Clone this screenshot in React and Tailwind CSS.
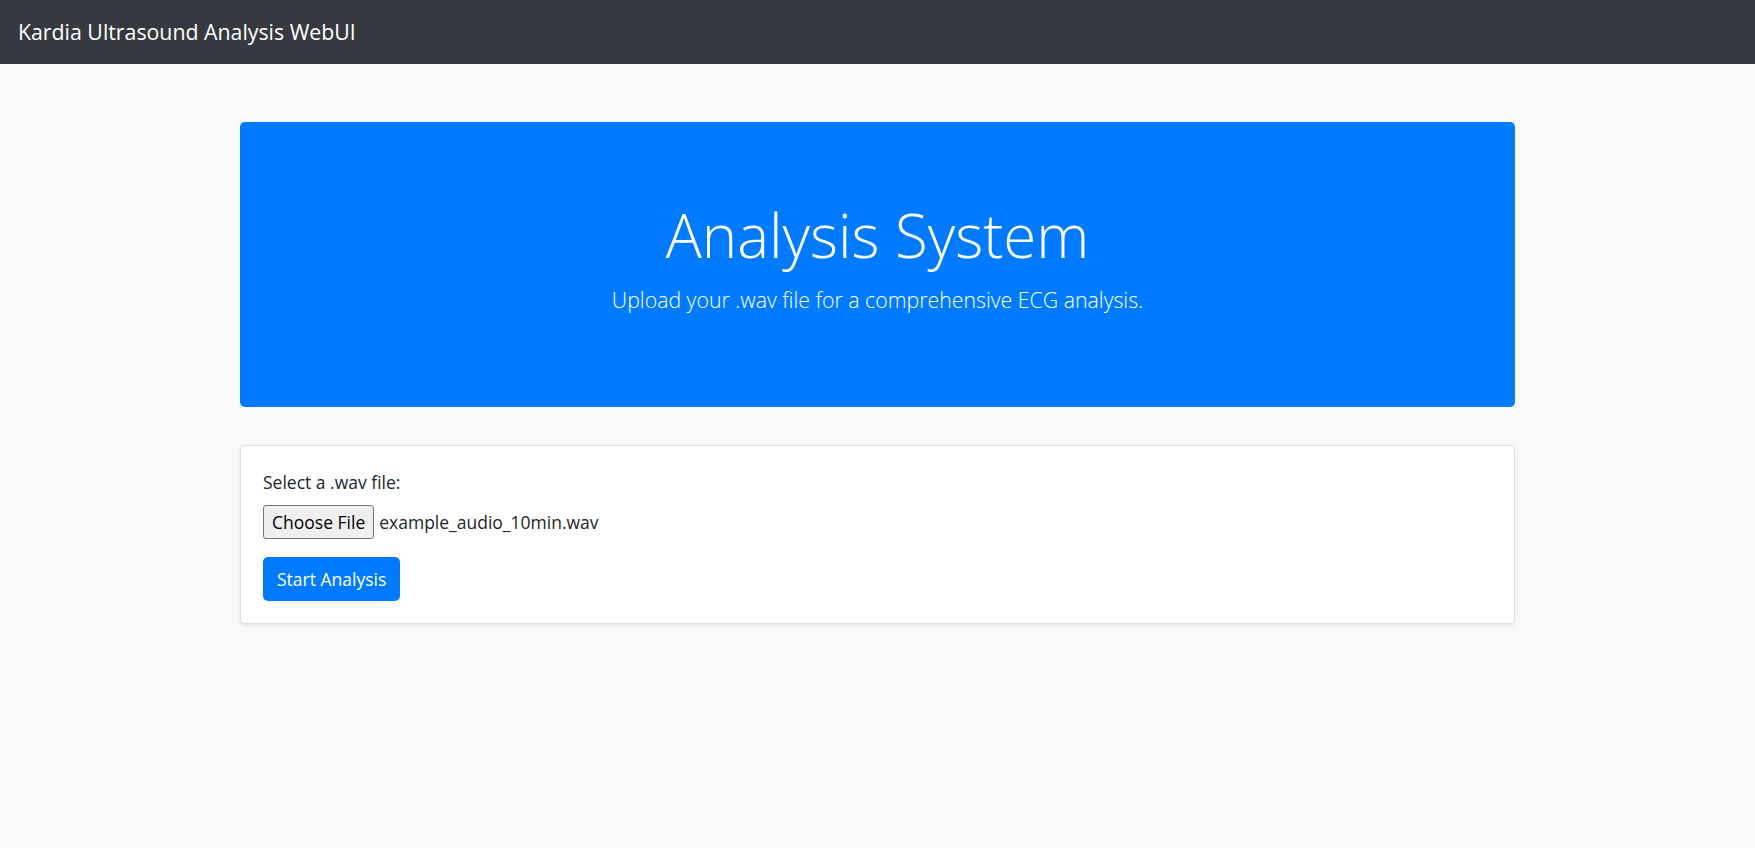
const font = { fontFamily: '"Open Sans", "Noto Sans", sans-serif' };

function Navbar() {
  return (
    <nav className="h-[64px] bg-[#343a40] flex items-center px-[18px]">
      <span className="text-white text-[21.3px] leading-none">Kardia Ultrasound Analysis WebUI</span>
    </nav>
  );
}

function Hero() {
  return (
    <div className="h-[285px] bg-[#007bff] rounded-[5px] text-white text-center pt-[76px]">
      <h1 className="text-[60px] font-light leading-[75px] mb-[10px]">Analysis System</h1>
      <p className="text-[21.3px] font-light leading-[34px]">
        Upload your .wav file for a comprehensive ECG analysis.
      </p>
    </div>
  );
}

function UploadCard() {
  return (
    <div className="mt-[38px] bg-white border border-black/[0.125] rounded-[5px] shadow-[0_2px_4px_rgba(0,0,0,0.075)] p-[22px] text-[#212529] text-[17.5px]">
      <label className="block leading-[28px] mb-[9px]">Select a .wav file:</label>
      <div className="flex items-center mb-[18px]">
        <span className="h-[34px] px-[8px] flex items-center bg-[#efefef] border border-[#767676] rounded-[3px] text-[#000]">
          Choose File
        </span>
        <span className="ml-[5px]">example_audio_10min.wav</span>
      </div>
      <button className="h-[44px] px-[14px] bg-[#007bff] text-white rounded-[5px] leading-[27px]">
        Start Analysis
      </button>
    </div>
  );
}

export default function App() {
  return (
    <div className="min-h-screen bg-[#f8f9fa]" style={font}>
      <Navbar />
      <main className="w-[1275px] mx-auto pt-[58px]">
        <Hero />
        <UploadCard />
      </main>
    </div>
  );
}
